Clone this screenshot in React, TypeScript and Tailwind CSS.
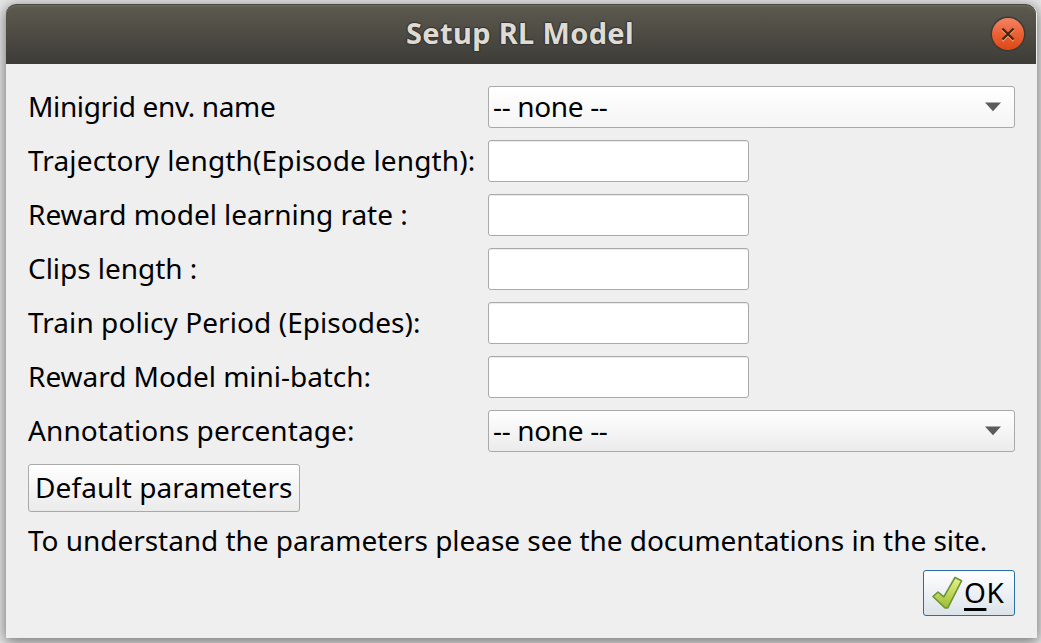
import React from "react";

function Label({ text, spacing }: { text: string; spacing: string }) {
  return (
    <div className="flex h-[42px] w-[460px] items-center pb-0.5">
      <span className={`whitespace-nowrap ${spacing}`}>{text}</span>
    </div>
  );
}

function Select({ shade }: { shade: string }) {
  return (
    <button
      className={`flex h-[42px] w-[527px] items-center justify-between rounded-[3px] border border-[#a9a9a9] bg-linear-to-b pr-[13px] pl-1 ${shade}`}
    >
      <span className="pb-0.5 tracking-[-0.35px] whitespace-nowrap">-- none --</span>
      <svg width="16" height="10" viewBox="0 0 16 10" className="block">
        <path d="M0 0.5H16L8 9.2Z" fill="#5b5b5b" />
      </svg>
    </button>
  );
}

function Field() {
  return (
    <input
      type="text"
      className="h-[42px] w-[261px] rounded-[3px] border border-[#a9a9a9] bg-white px-1 shadow-[inset_0_1px_0_#ececec] outline-none"
    />
  );
}

const fields = [
  { text: "Trajectory length(Episode length):", spacing: "tracking-[0.15px]" },
  { text: "Reward model learning rate :", spacing: "tracking-[-0.03px]" },
  { text: "Clips length :", spacing: "tracking-[-0.04px]" },
  { text: "Train policy Period (Episodes):", spacing: "tracking-[0.07px]" },
  { text: "Reward Model mini-batch:", spacing: "tracking-[-0.04px]" },
];

export default function App() {
  return (
    <div className="h-[643px] w-[1041px] overflow-hidden bg-[#e8e8e8] pt-1 pl-1.5 font-['Noto_Sans',sans-serif] text-[28px] leading-none text-black">
      <div className="flex h-[634px] w-[1031px] flex-col rounded-t-[10px] bg-[#efefef] shadow-[0_3px_14px_1px_rgba(0,0,0,0.5)]">
        <header className="flex h-[60px] w-[1030px] shrink-0 items-center rounded-t-[10px] border-t border-[#4b4a43] bg-linear-to-b from-[#5d5a4f] to-[#3d3c37] pr-2.5 pb-px pl-[400px] shadow-[inset_0_2px_0_#656257]">
          <h1 className="flex-1 pb-1 text-[29px] font-bold tracking-[0.35px] whitespace-nowrap text-[#dfdbd2] [text-shadow:0_-1px_1px_#333,0_1px_1px_#333,1px_0_1px_#333,-1px_0_1px_#333]">
            Setup RL Model
          </h1>
          <button aria-label="Close" className="block">
            <svg width="36" height="36" viewBox="0 0 36 36" className="block">
              <defs>
                <linearGradient id="close" x1="0" y1="0" x2="0" y2="1">
                  <stop offset="0" stopColor="#f58365" />
                  <stop offset="0.5" stopColor="#eb6134" />
                  <stop offset="1" stopColor="#dd4817" />
                </linearGradient>
              </defs>
              <circle cx="18" cy="18" r="17.5" fill="#3b3a35" />
              <circle cx="18" cy="18" r="16" fill="url(#close)" />
              <path d="M12.5 14L23.5 25M23.5 14L12.5 25" stroke="#f49a79" strokeWidth="2" />
              <path d="M12.5 12.5L23.5 23.5M23.5 12.5L12.5 23.5" stroke="#40270d" strokeWidth="2.2" />
            </svg>
          </button>
        </header>
        <main className="flex flex-col pt-[22px] pr-[22px] pl-[22px]">
          <div className="flex flex-col gap-3">
            <div className="flex">
              <Label text="Minigrid env. name" spacing="tracking-[-0.35px]" />
              <Select shade="from-white to-[#f5f5f5]" />
            </div>
            {fields.map((f) => (
              <div key={f.text} className="flex">
                <Label text={f.text} spacing={f.spacing} />
                <Field />
              </div>
            ))}
            <div className="flex">
              <Label text="Annotations percentage:" spacing="tracking-[0.09px]" />
              <Select shade="from-white to-[#ebebeb]" />
            </div>
          </div>
          <button className="mt-3 flex h-12 w-[272px] items-center rounded-[3px] border border-[#a9a9a9] bg-linear-to-b from-white to-[#ebebeb] pb-0.5 pl-1.5 tracking-[0.09px] whitespace-nowrap">
            Default parameters
          </button>
          <p className="mt-2 mb-px flex h-[42px] items-center pb-0.5 tracking-[-0.04px] whitespace-nowrap">
            To understand the parameters please see the documentations in the site.
          </p>
          <button className="mt-[7px] flex h-[46px] w-[92px] items-center self-end rounded-[3px] border border-[#266f9f] bg-linear-to-b from-white to-[#dbe3e9] pl-2">
            <svg width="31" height="34" viewBox="0 0 31 34" className="block shrink-0">
              <defs>
                <linearGradient id="check" x1="0" y1="0" x2="0" y2="1">
                  <stop offset="0" stopColor="#e8f28a" />
                  <stop offset="1" stopColor="#9dbd32" />
                </linearGradient>
              </defs>
              <path
                d="M1 20.5L6 16L11.8 20.8L23 1.5L29.5 4.8L15.8 32L13 32Z"
                fill="url(#check)"
                stroke="#6a9336"
                strokeWidth="1.6"
                strokeLinejoin="round"
              />
            </svg>
            <span className="ml-[1px] pb-0.5 tracking-[0.5px] whitespace-nowrap">
              <span className="underline decoration-[3px] underline-offset-5">O</span>K
            </span>
          </button>
        </main>
      </div>
    </div>
  );
}
